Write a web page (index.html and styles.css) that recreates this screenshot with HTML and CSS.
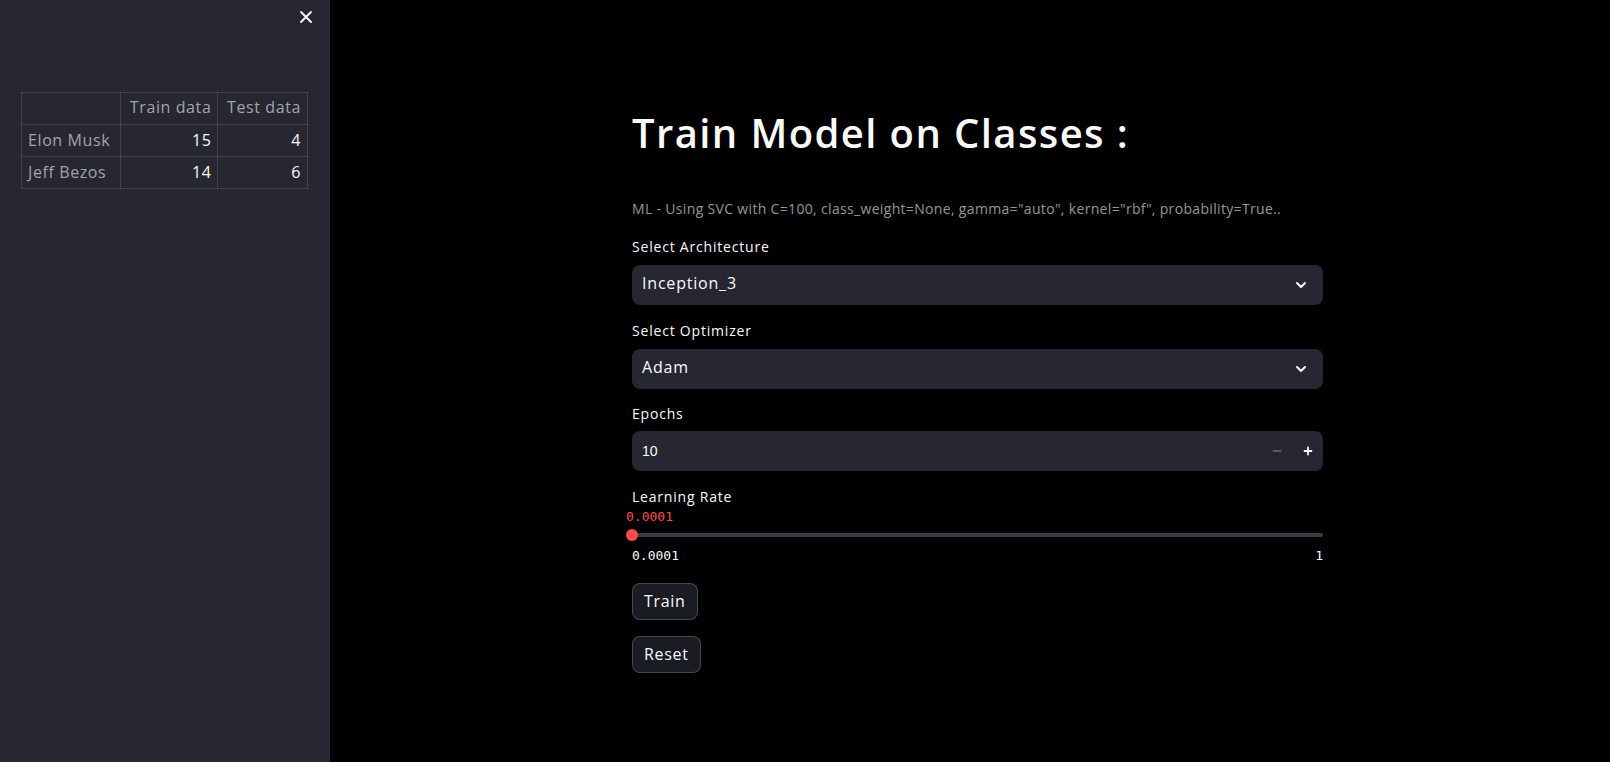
FILE: index.html
```html
<!DOCTYPE html>
<html>
<head>
<meta charset="utf-8">
<link rel="stylesheet" href="styles.css">
</head>
<body>
<div class="app">
  <aside class="sidebar">
    <div class="sb-top">
      <button class="close" aria-label="Close">
        <svg width="14" height="14" viewBox="0 0 14 14"><path d="M2 2L12 12M12 2L2 12" stroke="#fafafa" stroke-width="1.8" stroke-linecap="round"/></svg>
      </button>
    </div>
    <table class="stats">
      <thead>
        <tr><th class="blank"></th><th>Train data</th><th>Test data</th></tr>
      </thead>
      <tbody>
        <tr><th class="idx">Elon Musk</th><td>15</td><td>4</td></tr>
        <tr><th class="idx">Jeff Bezos</th><td>14</td><td>6</td></tr>
      </tbody>
    </table>
  </aside>
  <main class="main">
    <div class="block">
      <h1 class="title">Train Model on Classes :</h1>
      <p class="caption">ML - Using SVC with C=100, class_weight=None, gamma="auto", kernel="rbf", probability=True..</p>

      <div class="field first">
        <div class="label">Select Architecture</div>
        <div class="select">
          <span>Inception_3</span>
          <svg class="chev" width="12" height="8" viewBox="0 0 12 8"><path d="M2 2L6 6L10 2" fill="none" stroke="#fafafa" stroke-width="2" stroke-linecap="round" stroke-linejoin="round"/></svg>
        </div>
      </div>

      <div class="field">
        <div class="label">Select Optimizer</div>
        <div class="select">
          <span>Adam</span>
          <svg class="chev" width="12" height="8" viewBox="0 0 12 8"><path d="M2 2L6 6L10 2" fill="none" stroke="#fafafa" stroke-width="2" stroke-linecap="round" stroke-linejoin="round"/></svg>
        </div>
      </div>

      <div class="field epochs">
        <div class="label">Epochs</div>
        <div class="number">
          <span class="num-val">10</span>
          <span class="steppers">
            <svg class="minus" width="10" height="10" viewBox="0 0 10 10"><path d="M1.5 5H8.5" stroke="#6b6d76" stroke-width="1.6" stroke-linecap="round"/></svg>
            <svg class="plus" width="10" height="10" viewBox="0 0 10 10"><path d="M1.5 5H8.5M5 1.5V8.5" stroke="#fafafa" stroke-width="1.8" stroke-linecap="round"/></svg>
          </span>
        </div>
      </div>

      <div class="field slider-field">
        <div class="label">Learning Rate</div>
        <div class="slider-val">0.0001</div>
        <div class="slider">
          <div class="track"></div>
          <div class="thumb"></div>
        </div>
        <div class="ticks"><span>0.0001</span><span>1</span></div>
      </div>

      <button class="btn train">Train</button>
      <button class="btn reset">Reset</button>
    </div>
  </main>
</div>
</body>
</html>
```
FILE: styles.css
```css
* { box-sizing: border-box; }
html, body { margin: 0; padding: 0; background: #000; }
body {
  font-family: "Open Sans", "Noto Sans", sans-serif;
  color: #fafafa;
  letter-spacing: 0.4px;
}
.app {
  display: flex;
  width: 1610px;
  height: 762px;
  overflow: hidden;
}
.sidebar {
  width: 330px;
  flex: none;
  background: #262730;
  padding: 0 22px 0 21px;
}
.sb-top {
  display: flex;
  justify-content: flex-end;
  height: 92px;
  padding-top: 9px;
}
.close {
  background: none;
  border: 0;
  padding: 0;
  width: 16px;
  height: 16px;
  margin-right: -6px;
  display: flex;
  align-items: center;
  justify-content: center;
}
.stats {
  border-collapse: collapse;
  font-size: 16px;
  letter-spacing: 0.6px;
  width: 287px;
}
.stats th, .stats td {
  border: 1px solid rgba(250,250,250,0.12);
  height: 32px;
  padding: 0 6px 2px;
  font-weight: 400;
  white-space: nowrap;
}
.stats thead th {
  color: #a3a4ab;
  text-align: right;
  padding-bottom: 4px;
}
.stats th.blank { width: 99px; }
.stats th.idx {
  color: #a3a4ab;
  text-align: left;
}
.stats td {
  text-align: right;
  color: #fafafa;
}
.main {
  flex: 1;
  background: #000;
  padding-left: 302px;
}
.block {
  width: 691px;
  padding-top: 109px;
}
.title {
  margin: 0;
  font-size: 40px;
  line-height: 48px;
  font-weight: 600;
  letter-spacing: 1.4px;
}
.caption {
  margin: 42px 0 0;
  font-size: 14px;
  line-height: 20px;
  letter-spacing: 0.33px;
  color: rgba(250,250,250,0.6);
}
.field { margin-top: 17px; }
.field.first { margin-top: 19px; }
.label {
  font-size: 14px;
  line-height: 18px;
  margin-bottom: 9px;
  letter-spacing: 0.8px;
  color: #fafafa;
}
.field.epochs { margin-top: 16px; }
.field.epochs .label { margin-bottom: 8px; }
.select, .number {
  height: 40px;
  background: #262730;
  border-radius: 8px;
  display: flex;
  align-items: center;
  justify-content: space-between;
  padding: 0 16px 0 10px;
  font-size: 16px;
  letter-spacing: 0.8px;
}
.select span { position: relative; top: -2px; }
.number { padding: 0 10px 0 10px; }
.num-val {
  font-family: "Liberation Sans", "Open Sans", sans-serif;
  font-size: 14px;
  font-weight: 400;
  letter-spacing: 0;
}
.steppers {
  display: flex;
  align-items: center;
  gap: 21px;
}
.slider-field { margin-top: 17px; }
.slider-field .label { margin-bottom: 3px; }
.slider-val {
  font-family: "DejaVu Sans Mono", "Liberation Mono", monospace;
  font-size: 13px;
  line-height: 16px;
  letter-spacing: 0;
  color: #ff4b4b;
  margin-left: -6px;
}
.slider {
  position: relative;
  height: 20px;
  display: flex;
  align-items: center;
}
.track {
  flex: 1;
  height: 4px;
  border-radius: 2px;
  background: #3a3b42;
}
.thumb {
  position: absolute;
  left: -6px;
  top: 4px;
  width: 12px;
  height: 12px;
  border-radius: 50%;
  background: #ff4b4b;
}
.ticks {
  display: flex;
  justify-content: space-between;
  font-family: "DejaVu Sans Mono", "Liberation Mono", monospace;
  font-size: 13px;
  line-height: 16px;
  letter-spacing: 0;
  margin-top: 3px;
  color: #fafafa;
}
.btn {
  display: block;
  font-family: inherit;
  font-size: 16px;
  letter-spacing: 0.7px;
  color: #fafafa;
  background: #1a1c24;
  border: 1px solid rgba(250,250,250,0.2);
  border-radius: 8px;
  height: 37px;
  padding: 0 11px 2px;
  line-height: 1;
}
.train { margin-top: 19px; }
.reset { margin-top: 16px; }
```
